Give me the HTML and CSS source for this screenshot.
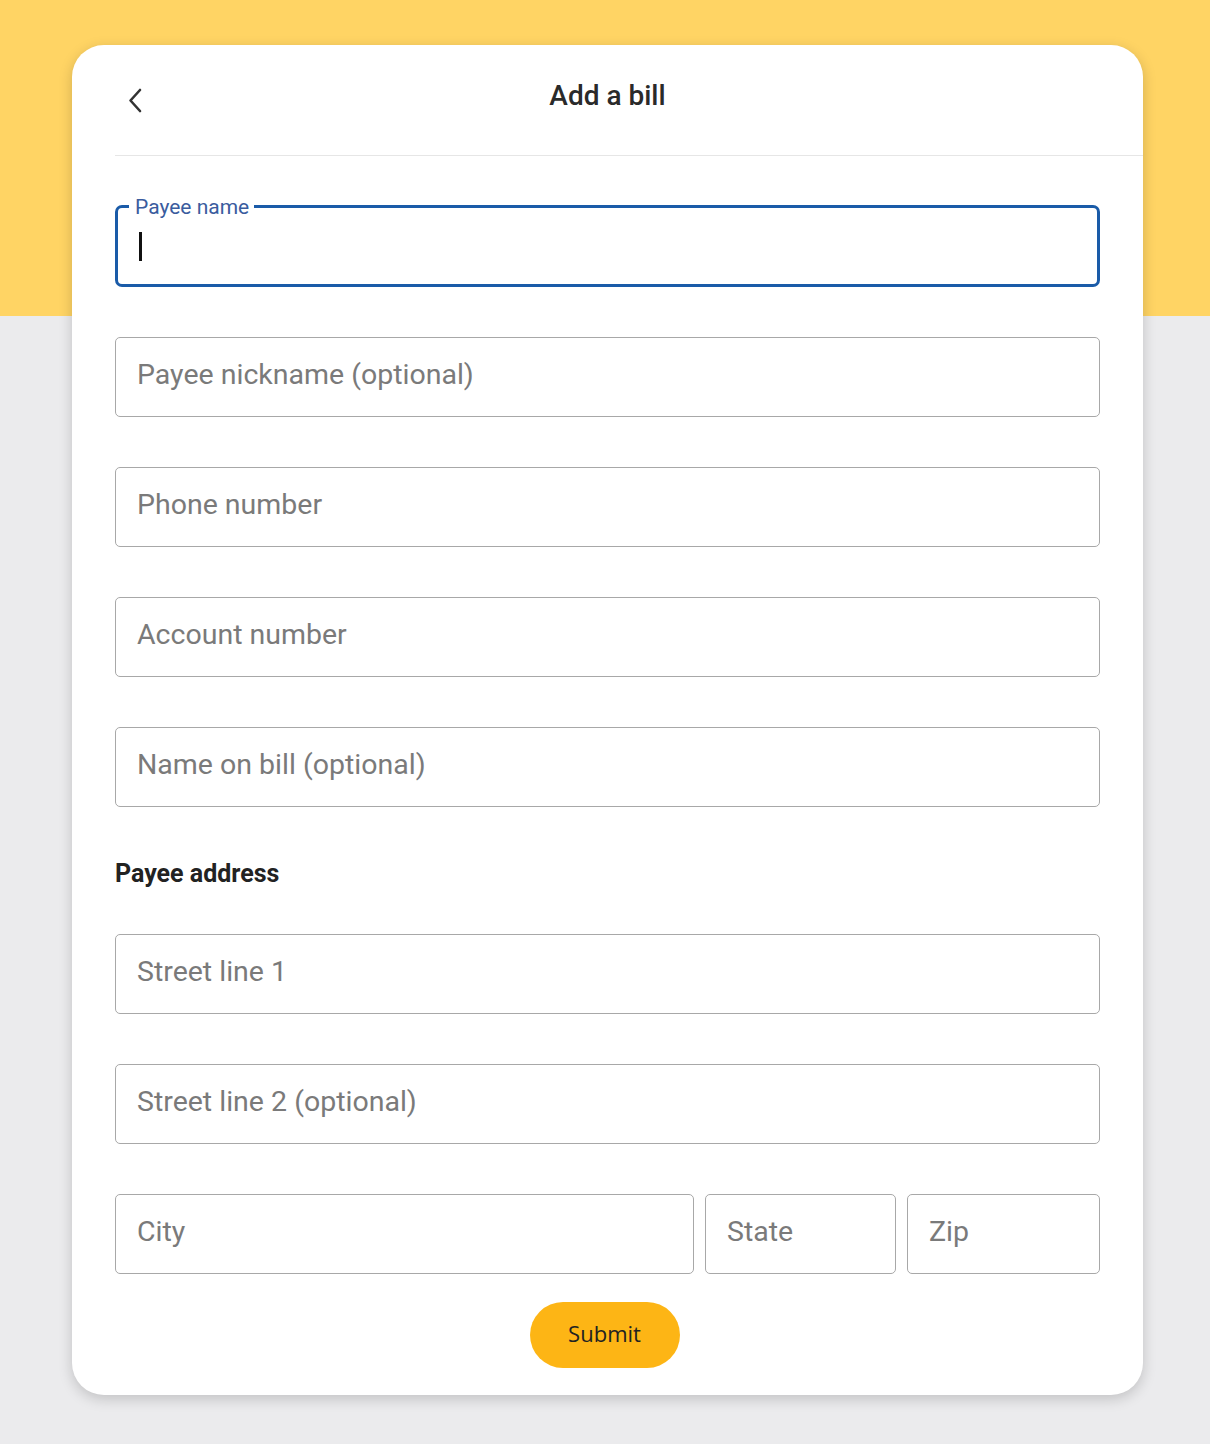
FILE: index.html
```html
<!DOCTYPE html>
<html lang="en">
<head>
<meta charset="utf-8">
<title>Add a bill</title>
<link rel="stylesheet" href="styles.css">
</head>
<body>
<div class="page">
  <div class="card">
    <header class="card-header">
      <button class="back" aria-label="Back">
        <svg width="24" height="28" viewBox="0 0 24 28"><path d="M16 3 6.5 13.5 16 24" fill="none" stroke="#333" stroke-width="2.6" stroke-linecap="round" stroke-linejoin="round"/></svg>
      </button>
      <h1 class="title">Add a bill</h1>
      <span></span>
    </header>
    <div class="divider"></div>
    <form class="form">
      <div class="field focused">
        <label class="float-label">Payee name</label>
        <span class="cursor"></span>
      </div>
      <div class="field"><span class="ph">Payee nickname (optional)</span></div>
      <div class="field"><span class="ph">Phone number</span></div>
      <div class="field"><span class="ph">Account number</span></div>
      <div class="field"><span class="ph">Name on bill (optional)</span></div>
      <h2 class="section">Payee address</h2>
      <div class="field"><span class="ph">Street line 1</span></div>
      <div class="field"><span class="ph">Street line 2 (optional)</span></div>
      <div class="row">
        <div class="field"><span class="ph">City</span></div>
        <div class="field"><span class="ph">State</span></div>
        <div class="field"><span class="ph">Zip</span></div>
      </div>
      <div class="actions"><button type="button" class="submit">Submit</button></div>
    </form>
  </div>
</div>
</body>
</html>
```
FILE: styles.css
```css
html, body { margin: 0; padding: 0; }
body {
  font-family: Roboto, "Liberation Sans", sans-serif;
  background: linear-gradient(#ffd464 0, #ffd464 316px, #ebebed 316px, #ebebed 100%);
  min-height: 1444px;
}
.page { padding: 45px 67px 49px 72px; }
.card {
  background: #fff;
  border-radius: 32px;
  box-shadow: 0 4px 14px rgba(0,0,0,0.18);
  padding-bottom: 27px;
}
.card-header {
  display: grid;
  grid-template-columns: 1fr auto 1fr;
  align-items: start;
  height: 110px;
  box-sizing: border-box;
  padding-top: 35px;
}
.back {
  justify-self: start;
  margin: 7px 0 0 52px;
  background: none;
  border: 0;
  padding: 0;
  width: 24px;
  height: 28px;
  cursor: pointer;
}
.back svg { display: block; }
.title {
  margin: 0;
  font-size: 28px;
  line-height: 32px;
  font-weight: 500;
  color: #2a2a2a;
}
.divider { height: 1px; background: #e6e6e6; margin-left: 43px; }
.form { padding: 49px 43px 0 43px; }
.field {
  position: relative;
  height: 80px;
  box-sizing: border-box;
  border: 1.5px solid #a8a8a8;
  border-radius: 5px;
  display: flex;
  align-items: center;
  padding: 0 0 5px 21px;
  margin-bottom: 50px;
}
.field.focused {
  height: 82px;
  border: 3px solid #1a5ba8;
  border-radius: 7px;
  padding-bottom: 0;
}
.float-label {
  position: absolute;
  left: 11px;
  top: -13px;
  background: #fff;
  padding: 0 5px 0 6px;
  font-size: 21px;
  line-height: 24px;
  color: #3a5c9e;
}
.cursor { width: 3px; height: 29px; background: #111; }
.ph { font-size: 28.5px; color: #7a7a7a; }
.section {
  margin: 53px 0 46px 0;
  font-size: 25px;
  line-height: 28px;
  font-weight: 700;
  color: #222;
}
.row {
  display: grid;
  grid-template-columns: 579px 191px 1fr;
  gap: 11px;
}
.row .field { margin-bottom: 0; }
.actions { display: flex; justify-content: center; margin-top: 28px; padding-right: 6px; }
.submit {
  width: 150px;
  height: 66px;
  border: 0;
  border-radius: 33px;
  background: #fdb515;
  font-family: "Open Sans", Lato, sans-serif;
  font-size: 22px;
  color: #222;
  padding: 0 0 4px 0;
  cursor: pointer;
}
```
